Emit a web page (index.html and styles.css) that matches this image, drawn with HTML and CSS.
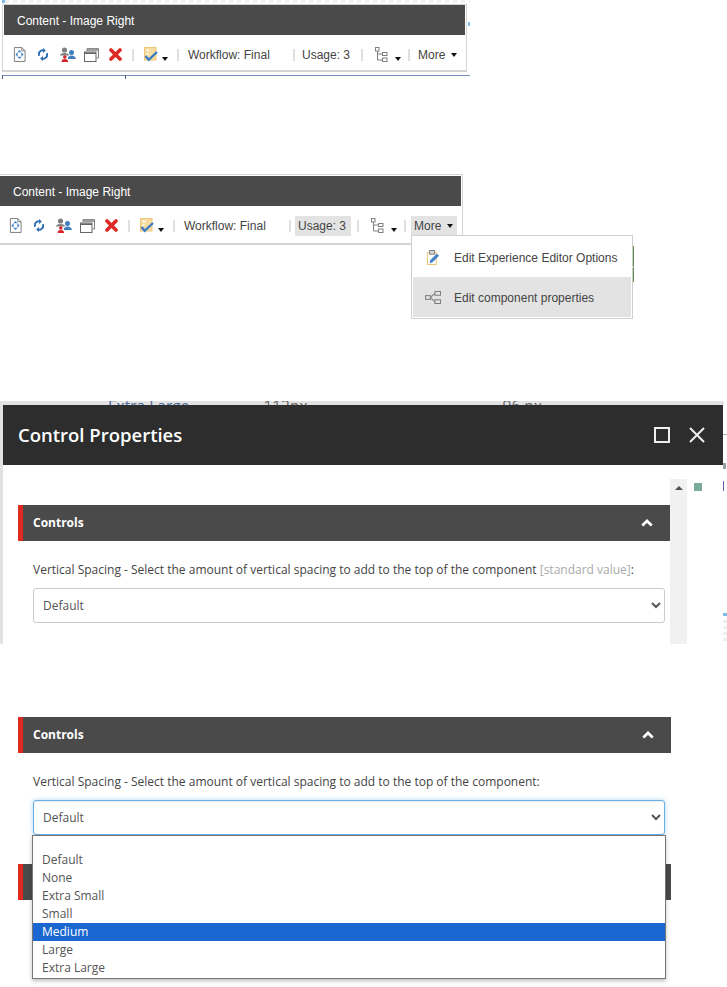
FILE: index.html
```html
<!DOCTYPE html>
<html lang="en">
<head>
<meta charset="utf-8">
<title>Control Properties</title>
<link rel="stylesheet" href="styles.css">
</head>
<body>
<svg class="defs" width="0" height="0" aria-hidden="true">
  <symbol id="i-doc" viewBox="0 0 14 16">
    <path d="M1.500 .5h8l3.500 3.500v11.500h-11.500z" fill="#fff" stroke="#777"/>
    <path d="M9.500 .5v3.500h3.500" fill="none" stroke="#777"/>
    <path d="M7 3.200l2.300 2.500h-4.600zM7 12.800l-2.300-2.500h4.600zM2.600 8l2.400-2.300v4.600zM11.400 8l-2.400-2.300v4.600z" fill="#3f83c6"/>
  </symbol>
  <symbol id="i-sync" viewBox="0 0 12 16">
    <path d="M1.500 9.500A4.500 4.500 0 0 1 7 3.300" fill="none" stroke="#2f6fb5" stroke-width="2.400"/>
    <path d="M10.500 6.500A4.500 4.500 0 0 1 5 12.700" fill="none" stroke="#2f6fb5" stroke-width="2.400"/>
    <path d="M6 .3l3.500 3-3.500 3zM6 9.700l-3.500 3 3.500 3z" fill="#2f6fb5"/>
  </symbol>
  <symbol id="i-users" viewBox="0 0 16 15">
    <circle cx="4.500" cy="3" r="2.600" fill="#808080"/>
    <path d="M0 8.500q0-2.500 4.500-2.500t4.500 2.500z" fill="#808080"/>
    <circle cx="4.800" cy="10" r="1.800" fill="#d8232a"/>
    <path d="M1.500 15q0-3 3.300-3t3.300 3z" fill="#d8232a"/>
    <circle cx="11.500" cy="5.500" r="2.500" fill="#3f7fbf"/>
    <path d="M7.800 12q0-3.500 3.700-3.500t4.500 3.500z" fill="#3f7fbf"/>
  </symbol>
  <symbol id="i-window" viewBox="0 0 15 14">
    <path d="M3 3V.6h11.500v9.400h-2" fill="none" stroke="#808080"/>
    <path d="M3 2h11" stroke="#808080" stroke-width="1.500"/>
    <rect x=".5" y="4" width="11.500" height="9.500" fill="#fff" stroke="#666"/>
    <path d="M.5 5.200h11.500" stroke="#666" stroke-width="1.600"/>
  </symbol>
  <symbol id="i-x" viewBox="0 0 13 13">
    <path d="M2 2l9 9M11 2l-9 9" stroke="#dd2a25" stroke-width="3.600" stroke-linecap="round"/>
  </symbol>
  <symbol id="i-check" viewBox="0 0 14 15">
    <rect x=".5" y=".5" width="11.500" height="12.500" fill="#f6dca0" stroke="#eec678"/>
    <path d="M2.500 3.500h3M2.500 7h2" stroke="#fff" stroke-width="1.500"/>
    <path d="M1.500 9l3.200 3.800L13 5" fill="none" stroke="#3a7cc2" stroke-width="2.400"/>
  </symbol>
  <symbol id="i-tree" viewBox="0 0 13 15">
    <g fill="#fff" stroke="#808080">
      <rect x=".5" y=".5" width="3.500" height="3.500"/>
      <rect x="7.500" y="5.500" width="4.500" height="3"/>
      <rect x="7.500" y="11" width="4.500" height="3.500"/>
    </g>
    <path d="M2.500 4v9h5M2.500 7h5" fill="none" stroke="#808080"/>
  </symbol>
  <symbol id="i-edit" viewBox="0 0 14 16">
    <path d="M1 2.500h9.500v13h-9.500z" fill="#fff" stroke="#e7bd6c"/>
    <rect x="3.500" y=".5" width="5" height="4" fill="#ddd" stroke="#777"/>
    <path d="M4 11l7-7 2.500 2-7 7-3 1z" fill="#3f83c6"/>
  </symbol>
  <symbol id="i-comp" viewBox="0 0 17 14">
    <g fill="none" stroke="#808080" stroke-width="1.100">
      <rect x=".6" y="5" width="5" height="4"/>
      <rect x="10.500" y=".6" width="6" height="4"/>
      <rect x="10.500" y="9.400" width="6" height="4"/>
      <path d="M5.600 7l4.900-4.500M5.600 7l4.900 4.500"/>
    </g>
  </symbol>
  <symbol id="i-chev" viewBox="0 0 12 8">
    <path d="M1.300 6.500L6 2l4.700 4.500" fill="none" stroke="#fff" stroke-width="2.800"/>
  </symbol>
</svg>

<section class="shot shot-one">
  <div class="edge-top"></div>
  <span class="edge-mark"></span>
  <div class="toolbar">
    <div class="tb-head">Content - Image Right</div>
    <div class="tb-body">
      <svg class="ic ic-doc"><use href="#i-doc"/></svg>
      <svg class="ic ic-sync"><use href="#i-sync"/></svg>
      <svg class="ic ic-users"><use href="#i-users"/></svg>
      <svg class="ic ic-window"><use href="#i-window"/></svg>
      <svg class="ic ic-x"><use href="#i-x"/></svg>
      <span class="sep sep-a"></span>
      <svg class="ic ic-check"><use href="#i-check"/></svg>
      <span class="caret caret-low"></span>
      <span class="sep sep-b"></span>
      <span class="tb-text tb-flow">Workflow: Final</span>
      <span class="sep sep-c"></span>
      <span class="tb-text tb-usage">Usage: 3</span>
      <span class="sep sep-d"></span>
      <svg class="ic ic-tree"><use href="#i-tree"/></svg>
      <span class="caret caret-low caret-tree"></span>
      <span class="sep sep-e"></span>
      <span class="tb-text tb-more">More<span class="caret caret-more"></span></span>
    </div>
  </div>
  <div class="page-rule"><i class="tick tick-a"></i><i class="tick tick-b"></i></div>
</section>

<section class="shot shot-two">
  <div class="toolbar toolbar-open">
    <div class="tb-head">Content - Image Right</div>
    <div class="tb-body">
      <svg class="ic ic-doc"><use href="#i-doc"/></svg>
      <svg class="ic ic-sync"><use href="#i-sync"/></svg>
      <svg class="ic ic-users"><use href="#i-users"/></svg>
      <svg class="ic ic-window"><use href="#i-window"/></svg>
      <svg class="ic ic-x"><use href="#i-x"/></svg>
      <span class="sep sep-a"></span>
      <svg class="ic ic-check"><use href="#i-check"/></svg>
      <span class="caret caret-low"></span>
      <span class="sep sep-b"></span>
      <span class="tb-text tb-flow">Workflow: Final</span>
      <span class="sep sep-c"></span>
      <span class="tb-text tb-usage is-active">Usage: 3</span>
      <span class="sep sep-d"></span>
      <svg class="ic ic-tree"><use href="#i-tree"/></svg>
      <span class="caret caret-low caret-tree"></span>
      <span class="sep sep-e"></span>
      <span class="tb-text tb-more is-active">More<span class="caret caret-more"></span></span>
    </div>
  </div>
  <ul class="menu">
    <li class="menu-item"><svg class="menu-ic"><use href="#i-edit"/></svg>Edit Experience Editor Options</li>
    <li class="menu-item is-hover"><svg class="menu-ic"><use href="#i-comp"/></svg>Edit component properties</li>
  </ul>
  <span class="menu-peek"></span>
</section>

<section class="shot shot-three">
  <div class="behind">
    <span class="behind-a">Extra Large</span><span class="behind-b">112px</span><span class="behind-c">96 px</span>
  </div>
  <div class="dialog">
    <header class="dlg-head">
      <h1 class="dlg-title">Control Properties</h1>
      <span class="dlg-max"></span>
      <svg class="dlg-close" viewBox="0 0 16 16"><path d="M1 1l14 14M15 1L1 15" stroke="#eee" stroke-width="2"/></svg>
    </header>
    <div class="dlg-body">
      <div class="dlg-main">
        <div class="sect-head">Controls<svg class="chev"><use href="#i-chev"/></svg></div>
        <div class="field">
          <label class="field-label">Vertical Spacing - Select the amount of vertical spacing to add to the top of the component <span class="std">[standard value]</span>:</label>
          <select class="field-select"><option>Default</option></select>
        </div>
      </div>
      <div class="scroll"><span class="scroll-up"></span></div>
      <span class="marker"></span>
    </div>
  </div>
  <span class="sliver"></span>
</section>

<section class="shot shot-four">
  <div class="sect-head sect-wide">Controls<svg class="chev"><use href="#i-chev"/></svg></div>
  <div class="field field-wide">
    <label class="field-label">Vertical Spacing - Select the amount of vertical spacing to add to the top of the component:</label>
    <select class="field-select is-focus"><option>Default</option></select>
    <ul class="options">
      <li class="opt opt-blank"></li>
      <li class="opt">Default</li>
      <li class="opt">None</li>
      <li class="opt">Extra Small</li>
      <li class="opt">Small</li>
      <li class="opt is-selected">Medium</li>
      <li class="opt">Large</li>
      <li class="opt">Extra Large</li>
    </ul>
  </div>
  <div class="sect-head sect-wide sect-next"></div>
</section>
</body>
</html>
```

FILE: styles.css
```css
* { box-sizing: border-box; }
html, body { margin: 0; padding: 0; }
body {
  width: 727px;
  height: 987px;
  overflow: hidden;
  background: #fff;
  font-family: "Liberation Sans", Arial, sans-serif;
  color: #333;
}
.defs { display: block; height: 0; }
.shot { position: relative; }

/* first capture */
.shot-one { height: 174px; padding: 4px 0 0 2px; }
.edge-top {
  position: absolute; left: 2px; top: 0; width: 468px; height: 3px;
  background: repeating-linear-gradient(90deg, #f0f0f0 0 4px, #fff 4px 8px);
  border-left: 3px solid #7fbbe8;
}
.edge-mark { position: absolute; left: 468px; top: 22px; width: 2px; height: 4px; background: #7fbbe8; }
.toolbar {
  width: 465px;
  height: 68px;
  border: 1px solid #d4d4d4;
  border-bottom-width: 2px;
  background: #fff;
}
.tb-head {
  height: 30px;
  margin: 0 1px 0 1px;
  padding: 9px 0 0 13px;
  background: #4a4a4a;
  color: #fff;
  font-size: 12px;
  line-height: 15px;
}
.tb-body { display: flex; align-items: center; height: 35px; padding: 4px 0 0 10px; position: relative; }
.ic { display: block; flex: none; }
.ic-doc { width: 13px; height: 15px; }
.ic-sync { width: 10px; height: 15px; margin-left: 12px; }
.ic-users { width: 16px; height: 15px; margin-left: 12px; }
.ic-window { width: 15px; height: 14px; margin-left: 8px; }
.ic-x { width: 13px; height: 13px; margin-left: 10px; }
.ic-check { width: 14px; height: 15px; margin-left: 10px; }
.ic-tree { width: 13px; height: 15px; margin-left: 12px; }
.sep { flex: none; width: 2px; height: 12px; background: #e0e0e0; }
.sep-a { margin-left: 10px; }
.sep-b { margin-left: 9px; }
.sep-c { margin-left: 22px; }
.sep-d { margin-left: 6px; }
.sep-e { margin-left: 7px; }
.caret {
  display: block; flex: none; width: 0; height: 0;
  border-left: 3.500px solid transparent;
  border-right: 3.500px solid transparent;
  border-top: 4px solid #111;
}
.caret-low { margin: 9px 0 0 4px; }
.caret-tree { margin-left: 7px; }
.caret-more { margin: 0 0 0 6px; display: inline-block; vertical-align: 2px; }
.tb-text { flex: none; font-size: 12px; line-height: 20px; color: #444; white-space: nowrap; }
.tb-flow { margin-left: 9px; width: 83px; }
.tb-usage { margin-left: 4px; padding: 0 5px 0 3px; height: 20px; }
.tb-more { margin-left: 5px; padding: 0 4px 0 3px; height: 20px; }
.is-active { background: #e3e3e3; }
.page-rule {
  position: absolute; left: 2px; top: 75px; width: 468px; height: 1px; background: #6f8fbf;
}
.tick { position: absolute; top: 0; width: 1px; height: 4px; background: #4d5f80; }
.tick-a { left: 0; }
.tick-b { left: 123px; }

/* second capture */
.shot-two { height: 227px; margin-left: -2px; }
.shot-two .toolbar { height: 71px; border-bottom-width: 2px; }
.shot-two .tb-head { height: 30px; margin-top: 1px; }
.menu {
  position: absolute; left: 413px; top: 61px; width: 222px; height: 84px;
  margin: 0; padding: 1px; list-style: none;
  background: #fff; border: 1px solid #cfcfcf;
}
.menu-item {
  display: flex; align-items: center; height: 40px;
  padding: 1px 0 0 12px;
  font-size: 12px; color: #444;
}
.menu-item.is-hover { background: #e3e3e3; }
.menu-ic { flex: none; width: 16px; height: 15px; margin-right: 13px; }
.menu-peek {
  position: absolute; left: 635px; top: 72px; width: 1px; height: 36px;
  background: linear-gradient(#5f8f4f 0 55%, #bbb 55% 62%, #5f8f4f 62%);
}

/* third capture */
.shot-three { height: 243px; background: #fff; }
.behind {
  height: 4px; width: 724px; overflow: hidden; background: #e2e2e2;
  padding-left: 108px; display: flex;
  font-family: "Open Sans", sans-serif; font-size: 15.500px; line-height: 11px; color: #4a6a9a;
}
.behind span { display: block; flex: none; white-space: nowrap; }
.behind-b { margin-left: 74px; color: #666; }
.behind-c { margin-left: 195px; color: #666; }
.dialog { width: 723px; height: 239px; border-left: 3px solid #e2e2e2; overflow: hidden; }
.dlg-head {
  display: flex; align-items: center; height: 60px; padding: 0 18px 0 15px;
  background: #2d2d2d; color: #fff;
}
.dlg-title {
  flex: 1; margin: 0;
  font-family: "Open Sans", sans-serif; font-size: 18.500px; font-weight: 600; line-height: 24px;
}
.dlg-max { flex: none; width: 16px; height: 16px; border: 2px solid #eee; margin-right: 19px; }
.dlg-close { flex: none; width: 16px; height: 16px; }
.dlg-body { position: relative; display: flex; height: 179px; background: #fff; padding: 14px 0 0 15px; }
.dlg-main { flex: none; width: 652px; padding-top: 26px; }
.sect-head {
  display: flex; align-items: center; justify-content: space-between;
  height: 36px; padding: 0 17px 1px 10px;
  background: #4a4a4a; border-left: 5px solid #df2a1f;
  font-family: "Open Sans", sans-serif; font-size: 12px; font-weight: 700; color: #fff;
}
.chev { display: block; width: 12px; height: 8px; flex: none; }
.field { padding: 0 5px 0 15px; }
.field-label {
  display: block; margin: 21px 0 0;
  font-family: "Open Sans", sans-serif; font-size: 12px; line-height: 16px; color: #444;
}
.std { color: #aaa; }
.field-select {
  display: block; width: 632px; height: 35px; margin-top: 10px;
  padding: 0 5px;
  background: #fff; border: 1px solid #ccc; border-radius: 3px;
  font-family: "Open Sans", sans-serif; font-size: 12px; color: #555;
  outline: none;
}
.scroll {
  flex: none; width: 17px; height: 165px; background: #f1f1f1;
  display: flex; justify-content: center; padding-top: 7px;
}
.scroll-up {
  width: 0; height: 0;
  border-left: 4px solid transparent; border-right: 4px solid transparent;
  border-bottom: 4px solid #505050;
}
.marker { flex: none; width: 8px; height: 8px; margin: 4px 0 0 7px; background: #7aab9b; }
.sliver {
  position: absolute; left: 723px; top: 4px; width: 4px; height: 239px;
  background:
    linear-gradient(#aaa, #aaa) 0 29px / 4px 1px no-repeat,
    linear-gradient(#9aa0a8, #9aa0a8) 0 58px / 3px 6px no-repeat,
    linear-gradient(#6a62b0, #6a62b0) 0 76px / 1px 10px no-repeat,
    linear-gradient(#7fbbe8, #7fbbe8) 0 208px / 4px 3px no-repeat,
    repeating-linear-gradient(#eee 0 3px, #fff 3px 6px) 0 215px / 4px 24px no-repeat;
}

/* fourth capture */
.shot-four { height: 343px; padding: 73px 0 0 18px; }
.sect-wide { width: 653px; }
.field-wide { position: relative; width: 653px; }
.field-select.is-focus { border-color: #66afe9; box-shadow: 0 0 5px rgba(102, 175, 233, .5), inset 0 1px 1px rgba(0, 0, 0, .08); }
.sect-next { margin-top: 29px; }
.options {
  position: absolute; left: 14px; top: 61px; z-index: 2;
  width: 634px; height: 144px; margin: 0; padding: 0; list-style: none;
  background: #fff; border: 1px solid #767676;
  box-shadow: 0 2px 4px rgba(0, 0, 0, .25);
  font-family: "Open Sans", sans-serif; font-size: 12px; color: #555;
}
.opt { height: 18px; line-height: 18px; padding-left: 9px; }
.opt-blank { height: 15px; }
.opt.is-selected { background: #1a67d2; color: #fff; }
```
